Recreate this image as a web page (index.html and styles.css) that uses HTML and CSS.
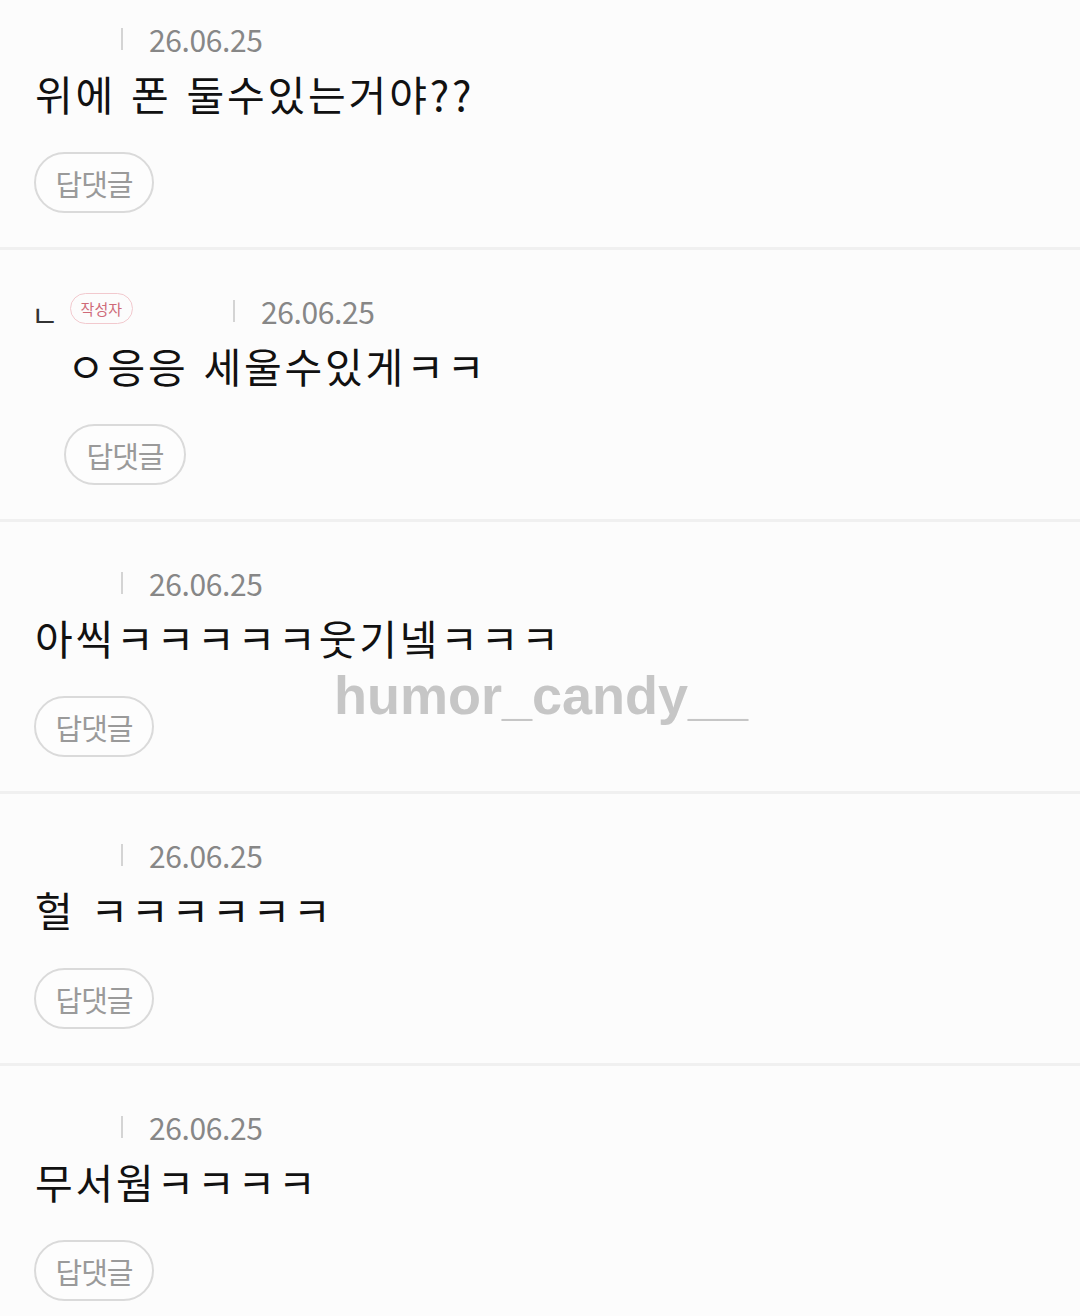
FILE: index.html
```html
<!doctype html>
<html>
  <head>
    <meta charset="UTF-8" />
    <link rel="stylesheet" href="styles.css">
  </head>
  <body>
    <div class="comments">
      <div class="comment">
        <div class="meta">
          <span class="name"></span>
          <span class="bar"></span>
          <span class="date">26.06.25</span>
        </div>
        <div class="text">위에 폰 둘수있는거야??</div>
        <button class="reply-btn">답댓글</button>
      </div>

      <div class="comment reply">
        <div class="meta">
          <span class="arrow">ㄴ</span>
          <span class="badge">작성자</span>
          <span class="name"></span>
          <span class="bar"></span>
          <span class="date">26.06.25</span>
        </div>
        <div class="text">ㅇ응응 세울수있게ㅋㅋ</div>
        <button class="reply-btn">답댓글</button>
      </div>

      <div class="comment">
        <div class="meta">
          <span class="name"></span>
          <span class="bar"></span>
          <span class="date">26.06.25</span>
        </div>
        <div class="text">아씩ㅋㅋㅋㅋㅋ웃기넼ㅋㅋㅋ</div>
        <button class="reply-btn">답댓글</button>
      </div>

      <div class="comment">
        <div class="meta">
          <span class="name"></span>
          <span class="bar"></span>
          <span class="date">26.06.25</span>
        </div>
        <div class="text">헐 ㅋㅋㅋㅋㅋㅋ</div>
        <button class="reply-btn">답댓글</button>
      </div>

      <div class="comment">
        <div class="meta">
          <span class="name"></span>
          <span class="bar"></span>
          <span class="date">26.06.25</span>
        </div>
        <div class="text">무서웜ㅋㅋㅋㅋ</div>
        <button class="reply-btn">답댓글</button>
      </div>
    </div>

    <div class="watermark">humor_candy__</div>
  </body>
</html>
```

FILE: styles.css
```css
html,
body {
  margin: 0;
  background: #fcfcfc;
  color: #111;
  font-family: "Noto Sans CJK KR", "Noto Sans", sans-serif;
}
body {
  position: relative;
  height: 1316px;
  overflow: hidden;
}
.comments {
  display: flex;
  flex-direction: column;
}
.comment {
  display: flex;
  flex-direction: column;
  align-items: flex-start;
  padding: 43px 0 34px 35px;
  border-bottom: 3px solid #f0f0f0;
}
.comment:first-child {
  padding-top: 21px;
}
.meta {
  display: flex;
  align-items: center;
  height: 36px;
  margin-bottom: 9px;
}
.name {
  width: 86px;
}
.reply .name {
  width: 100px;
}
.bar {
  width: 2px;
  height: 22px;
  background: #d4d4d4;
  margin-right: 26px;
}
.date {
  font-size: 30px;
  letter-spacing: -0.4px;
  color: #878787;
  line-height: 36px;
}
.arrow {
  font-size: 30px;
  line-height: 36px;
  color: #333;
  margin-top: 6px;
  margin-right: 11px;
  margin-left: -4px;
}
.badge {
  font-size: 15px;
  color: #cf6a78;
  border: 1.5px solid #f2c9ce;
  border-radius: 16px;
  height: 29px;
  line-height: 29px;
  padding: 0 10px;
  margin-top: -6px;
}
.text {
  font-size: 41px;
  line-height: 54px;
  letter-spacing: 2.8px;
  word-spacing: 3px;
  white-space: pre;
}
.reply .text {
  margin-left: 32px;
}
.reply-btn {
  margin-top: 32px;
  height: 61px;
  width: 120px;
  padding: 0;
  border: 2px solid #dadada;
  border-radius: 31px;
  background: #fdfdfd;
  color: #9a9a9a;
  font-family: "Noto Sans CJK KR", sans-serif;
  font-size: 29px;
  letter-spacing: -1px;
  margin-left: -1px;
}
.reply .reply-btn {
  margin-left: 29px;
  width: 122px;
}
.watermark {
  position: absolute;
  left: 334px;
  top: 668px;
  font-family: "Liberation Sans", Arial, sans-serif;
  font-weight: bold;
  font-size: 54px;
  line-height: 1;
  color: #c6c6c6;
}
```
